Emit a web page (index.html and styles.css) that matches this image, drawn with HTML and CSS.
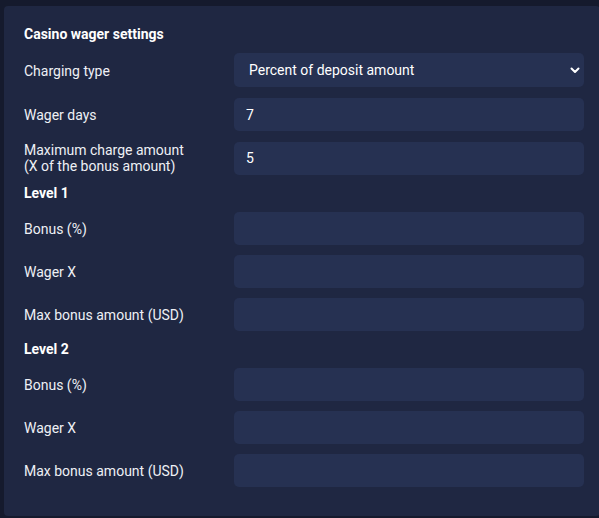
FILE: index.html
```html
<!DOCTYPE html>
<html>
<head>
<meta charset="utf-8">
<link rel="stylesheet" href="styles.css">
</head>
<body>
<div class="panel">
  <div class="title">Casino wager settings</div>
  <div class="rows">
    <div class="row row-select">
      <label class="label">Charging type</label>
      <div class="select-wrap">
        <select class="field select">
          <option>Percent of deposit amount</option>
        </select>
        <svg class="chev" width="10" height="7" viewBox="0 0 10 7"><path d="M1.5 1.5 L5 5 L8.5 1.5" fill="none" stroke="#ffffff" stroke-width="2" stroke-linecap="round" stroke-linejoin="round"/></svg>
      </div>
    </div>
    <div class="row">
      <label class="label">Wager days</label>
      <input class="field" value="7">
    </div>
    <div class="row row-tall">
      <label class="label">Maximum charge amount<br>(X of the bonus amount)</label>
      <input class="field" value="5">
    </div>
    <div class="level">Level 1</div>
    <div class="row">
      <label class="label">Bonus (%)</label>
      <input class="field" value="">
    </div>
    <div class="row">
      <label class="label">Wager X</label>
      <input class="field" value="">
    </div>
    <div class="row">
      <label class="label">Max bonus amount (USD)</label>
      <input class="field" value="">
    </div>
    <div class="level">Level 2</div>
    <div class="row">
      <label class="label">Bonus (%)</label>
      <input class="field" value="">
    </div>
    <div class="row">
      <label class="label">Wager X</label>
      <input class="field" value="">
    </div>
    <div class="row">
      <label class="label">Max bonus amount (USD)</label>
      <input class="field" value="">
    </div>
  </div>
</div>
</body>
</html>
```

FILE: styles.css
```css
html, body {
  margin: 0;
  padding: 0;
  background: #151a2d;
  overflow: hidden;
}
body {
  width: 599px;
  height: 518px;
  font-family: Roboto, "Liberation Sans", sans-serif;
  color: #f2f3f7;
}
.panel {
  margin: 6px 0 0 4px;
  width: 596px;
  height: 510px;
  box-sizing: border-box;
  background: #1f2742;
  border-radius: 4px;
  padding: 20px 16px 29px 20px;
}
.title {
  font-size: 14px;
  font-weight: 700;
  line-height: 17px;
  height: 17px;
  margin-bottom: 10px;
  color: #ffffff;
}
.rows {
  display: flex;
  flex-direction: column;
  gap: 10px;
}
.row {
  display: grid;
  grid-template-columns: 210px 350px;
  align-items: center;
  min-height: 33px;
}
.row-select {
  min-height: 35px;
}
.row-tall {
  min-height: 34px;
}
.label {
  font-size: 14px;
  line-height: 16px;
  color: #eef0f5;
}
.level {
  font-size: 14px;
  font-weight: 700;
  line-height: 17px;
  height: 17px;
  color: #ffffff;
}
.field {
  box-sizing: border-box;
  width: 350px;
  height: 33px;
  border: none;
  outline: none;
  border-radius: 5px;
  background: #263152;
  color: #ffffff;
  font-family: Roboto, "Liberation Sans", sans-serif;
  font-size: 14px;
  padding: 0 12px;
  margin: 0;
}
.select-wrap {
  position: relative;
  width: 350px;
  height: 34px;
  align-self: start;
}
.select {
  -webkit-appearance: none;
  appearance: none;
  height: 34px;
  padding-left: 15px;
}
.chev {
  position: absolute;
  right: 4px;
  top: 14px;
  pointer-events: none;
}
```
